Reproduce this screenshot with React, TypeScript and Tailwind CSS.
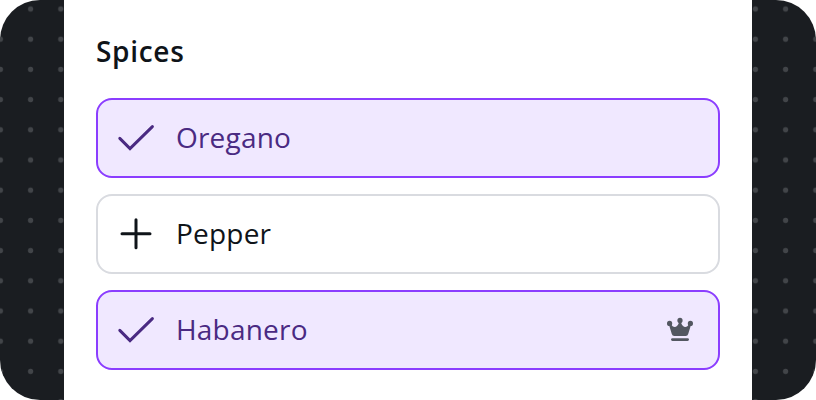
import React, { useState } from "react";

type Accent = "none" | "crown";

interface Spice {
  id: string;
  label: string;
  accent: Accent;
}

const spices: Spice[] = [
  { id: "oregano", label: "Oregano", accent: "none" },
  { id: "pepper", label: "Pepper", accent: "none" },
  { id: "habanero", label: "Habanero", accent: "crown" },
];

function CheckIcon() {
  return (
    <svg className="size-12 shrink-0" viewBox="0 0 48 48" fill="none" stroke="currentColor" strokeWidth="3" strokeLinecap="round">
      <path d="M7.8 24.4 18 34.6 40.4 12.6" />
    </svg>
  );
}

function PlusIcon() {
  return (
    <svg className="size-12 shrink-0" viewBox="0 0 48 48" fill="none" stroke="currentColor" strokeWidth="3" strokeLinecap="round">
      <path d="M24 9.8v28M10 23.8h28" />
    </svg>
  );
}

function CrownIcon() {
  return (
    <svg className="size-8 shrink-0 text-[#535761]" viewBox="0 0 32 32" fill="currentColor">
      <circle cx="16" cy="6.4" r="2.6" />
      <circle cx="5.6" cy="9.4" r="2.6" />
      <circle cx="26.4" cy="9.4" r="2.6" />
      <path d="M4.9 10.4 7 10C8 12.1 9.6 13.2 11.2 12.9 13.4 12.5 14.8 10.4 15 7.6h2C17.2 10.4 18.6 12.5 20.8 12.9 22.4 13.2 24 12.1 25 10L27.1 10.4 24.2 20Q23.7 21.9 21.7 21.9H10.3Q8.3 21.9 7.8 20Z" />
      <rect x="7" y="24.2" width="18" height="2.8" rx="1.4" />
    </svg>
  );
}

export default function App() {
  const [selected, setSelected] = useState<string[]>(["oregano", "habanero"]);

  const toggle = (id: string) =>
    setSelected((prev) => (prev.includes(id) ? prev.filter((s) => s !== id) : [...prev, id]));

  return (
    <div className="relative flex h-[400px] w-[816px] justify-center overflow-hidden rounded-[40px] bg-[#1a1d21] font-['Open_Sans',sans-serif]">
      {/* Dotted canvas */}
      <svg className="absolute inset-0 size-full text-[#424549]" aria-hidden="true">
        <defs>
          <pattern id="dots" x="-14.7" y="-6.1" width="30.2" height="30.2" patternUnits="userSpaceOnUse">
            <circle cx="15.1" cy="15.1" r="2.6" fill="currentColor" />
          </pattern>
        </defs>
        <rect width="100%" height="100%" fill="url(#dots)" />
      </svg>

      <div className="relative w-[688px] bg-white px-8 pt-[31px]">
        <h2 className="h-10 text-[28px] leading-10 font-semibold tracking-[0.7px] text-[#0f1419]">Spices</h2>
        <div className="mt-[27px] flex flex-col gap-4">
          {spices.map((spice) => {
            const active = selected.includes(spice.id);
            return (
              <button
                key={spice.id}
                aria-pressed={active}
                onClick={() => toggle(spice.id)}
                className={`flex h-20 w-full items-center rounded-2xl border-2 pr-[22px] pl-3.5 text-left ${
                  active ? "border-[#8b3dff] bg-[#f0e8ff] text-[#4a2a82]" : "border-[#d9dbe0] bg-white text-[#0f1419]"
                }`}
              >
                {active ? <CheckIcon /> : <PlusIcon />}
                <span className="ml-4 flex-1 pb-0.5 text-[28px] leading-10 tracking-[0.2px]">{spice.label}</span>
                {spice.accent === "crown" && <CrownIcon />}
              </button>
            );
          })}
        </div>
      </div>
    </div>
  );
}
